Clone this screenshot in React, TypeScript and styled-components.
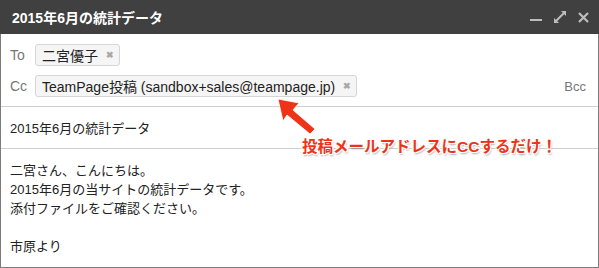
// Compose window with an annotation callout
import React from 'react';
import styled, { createGlobalStyle } from 'styled-components';

const GlobalStyle = createGlobalStyle`
  html, body {
    margin: 0;
    padding: 0;
    background: #fff;
  }
  body {
    font-family: "Liberation Sans", "Noto Sans CJK JP", sans-serif;
    color: #222;
  }
`;

const Window = styled.div`
  position: relative;
  width: 599px;
  height: 268px;
  display: flex;
  flex-direction: column;
  box-sizing: border-box;
  overflow: hidden;
`;

const Header = styled.div`
  height: 34px;
  flex: none;
  background: #404040;
  display: flex;
  align-items: center;
  padding: 0 10px 0 12px;
`;

const Title = styled.div`
  flex: 1;
  color: #fff;
  font-size: 14px;
  font-weight: 700;
`;

const HeaderIcons = styled.div`
  display: flex;
  align-items: center;
  gap: 12px;
`;

const Main = styled.div`
  flex: 1;
  display: flex;
  flex-direction: column;
  border: 1px solid #7c7c7c;
  border-top: none;
`;

const Recipients = styled.div`
  display: flex;
  flex-direction: column;
  gap: 9px;
  padding: 10px 12px 9px 9px;
  border-bottom: 1px solid #cfcfcf;
`;

const Row = styled.div`
  display: flex;
  align-items: center;
  height: 22px;
`;

const Label = styled.span`
  width: 25px;
  color: #777;
  font-size: 14px;
`;

const Chip = styled.span`
  display: inline-flex;
  align-items: center;
  height: 22px;
  box-sizing: border-box;
  padding: 0 5px 0 6px;
  background: #f5f5f5;
  border: 1px solid #d6d6d6;
  border-radius: 3px;
  font-size: 14px;
  color: #222;
`;

const ChipClose = styled.span`
  margin-left: 8px;
  color: #a8a8a8;
  font-size: 9px;
  font-weight: 700;
`;

const Bcc = styled.span`
  margin-left: auto;
  color: #777;
  font-size: 13px;
`;

const Subject = styled.div`
  height: 41px;
  display: flex;
  align-items: center;
  padding-left: 9px;
  font-size: 13px;
  color: #222;
  border-bottom: 1px solid #cfcfcf;
`;

const Body = styled.div`
  padding: 12px 9px 0;
  font-size: 13px;
  line-height: 19px;
  color: #222;
`;

const Line = styled.div`
  min-height: 19px;
`;

const Callout = styled.div`
  position: absolute;
  left: 302px;
  top: 134px;
  color: #ee3418;
  font-size: 15.5px;
  font-weight: 700;
  white-space: nowrap;
  text-shadow:
    -1px 0 #fff, 1px 0 #fff, 0 -1px #fff, 0 1px #fff,
    -1px -1px #fff, 1px 1px #fff, -1px 1px #fff, 1px -1px #fff,
    1px 2px 2px rgba(0, 0, 0, 0.35);
`;

const ArrowSvg = styled.svg`
  position: absolute;
  left: 0;
  top: 0;
  pointer-events: none;
`;

const Minimize = () => (
  <svg width="12" height="12" viewBox="0 0 12 12">
    <rect x="0" y="8" width="12" height="2" fill="#bdbdbd" />
  </svg>
);

const Expand = () => (
  <svg width="12" height="12" viewBox="0 0 12 12" fill="#bdbdbd">
    <polygon points="12,0 12,5 7,0" />
    <polygon points="0,12 0,7 5,12" />
    <line x1="2" y1="10" x2="10" y2="2" stroke="#bdbdbd" strokeWidth="2" />
  </svg>
);

const Close = () => (
  <svg width="11" height="11" viewBox="0 0 11 11">
    <path d="M1 1 L10 10 M10 1 L1 10" stroke="#bdbdbd" strokeWidth="2.2" />
  </svg>
);

export default function App() {
  return (
    <>
      <GlobalStyle />
      <Window>
        <Header>
          <Title>2015年6月の統計データ</Title>
          <HeaderIcons>
            <Minimize />
            <Expand />
            <Close />
          </HeaderIcons>
        </Header>
        <Main>
          <Recipients>
            <Row>
              <Label>To</Label>
              <Chip>
                二宮優子
                <ChipClose>✖</ChipClose>
              </Chip>
            </Row>
            <Row>
              <Label>Cc</Label>
              <Chip>
                TeamPage投稿 (sandbox+sales@teampage.jp)
                <ChipClose>✖</ChipClose>
              </Chip>
              <Bcc>Bcc</Bcc>
            </Row>
          </Recipients>
          <Subject>2015年6月の統計データ</Subject>
          <Body>
            <Line>二宮さん、こんにちは。</Line>
            <Line>2015年6月の当サイトの統計データです。</Line>
            <Line>添付ファイルをご確認ください。</Line>
            <Line />
            <Line>市原より</Line>
          </Body>
        </Main>
        <ArrowSvg width="599" height="268">
          <polygon
            points="278,99 299,103 293,110 315,129 310,134 287,115 283,121"
            fill="#ee3418"
            stroke="#fff"
            strokeWidth="0.8"
            strokeLinejoin="round"
          />
        </ArrowSvg>
        <Callout>投稿メールアドレスにCCするだけ！</Callout>
      </Window>
    </>
  );
}
